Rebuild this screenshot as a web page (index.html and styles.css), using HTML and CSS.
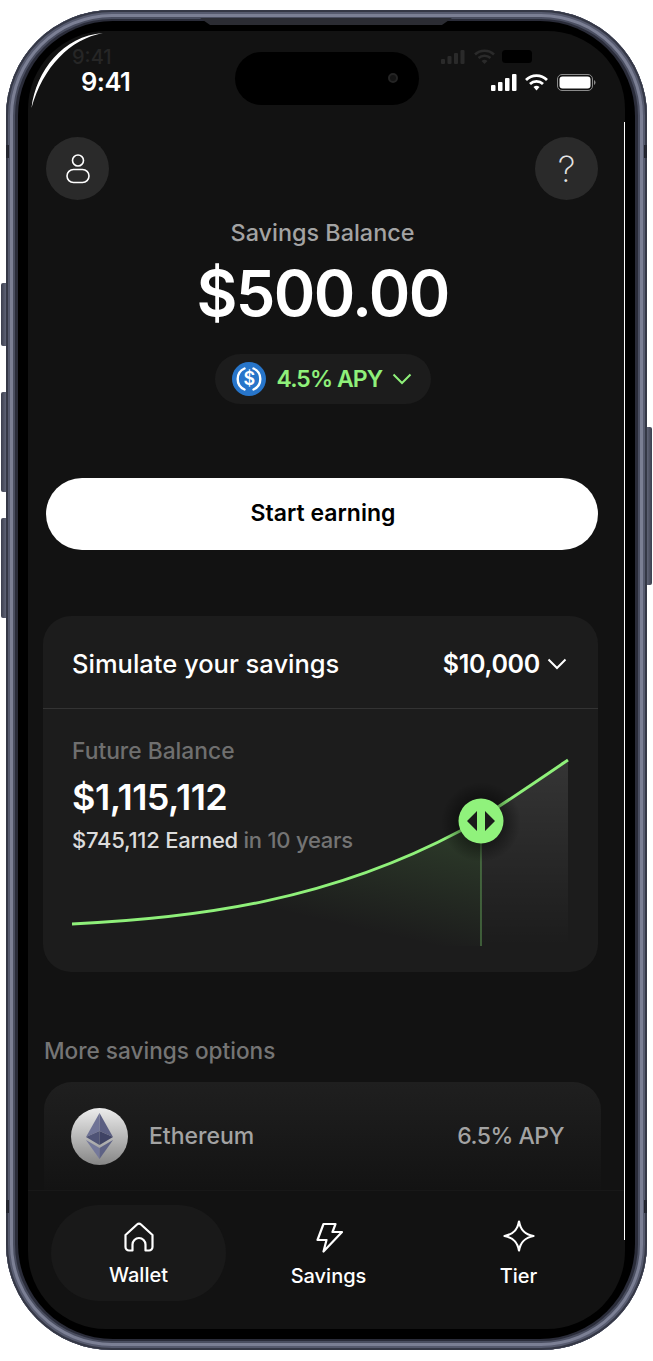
FILE: index.html
```html
<!DOCTYPE html>
<html lang="en">
<head>
    <meta charset="UTF-8">
    <title>Savings</title>
    <link rel="stylesheet" href="styles.css">
</head>
<body>

<div class="phone">
    <span class="side side-l1"></span>
    <span class="side side-l2"></span>
    <span class="side side-l3"></span>
    <span class="side side-r1"></span>
    <span class="band band-tl"></span>
    <span class="band band-tr"></span>
    <span class="band band-bl"></span>
    <span class="band band-br"></span>
    <span class="speaker"></span>

    <div class="bezel">
        <div class="screen">
            <!-- leftovers of the mockup: second status bar and white edge -->
            <div class="ghost-status">
                <span class="ghost-time">9:41</span>
                <svg class="ghost-icons" width="95" height="16" viewBox="0 0 95 16">
                    <rect x="1" y="10" width="4" height="5" rx="1" fill="#2a2a2a"/>
                    <rect x="7.5" y="7" width="4" height="8" rx="1" fill="#2a2a2a"/>
                    <rect x="14" y="4" width="4" height="11" rx="1" fill="#2a2a2a"/>
                    <rect x="20.5" y="1" width="4" height="14" rx="1" fill="#2a2a2a"/>
                    <path d="M35 5.5a14 14 0 0 1 19 0M38.5 9a9 9 0 0 1 12 0" fill="none" stroke="#2a2a2a" stroke-width="2.6"/>
                    <path d="M41.5 12a4.5 4.5 0 0 1 6 0L44.5 15z" fill="#2a2a2a"/>
                    <rect x="62" y="1" width="30" height="13" rx="3.5" fill="#000"/>
                </svg>
            </div>
            <svg class="edge-arc" width="90" height="90" viewBox="0 0 90 90">
                <path d="M3.5 77C8 40 35 5 75 2 42 8 15 36 3.5 77z" fill="#fff"/>
            </svg>
            <span class="edge-line"></span>
            <div class="island"><span class="camera"></span></div>

            <div class="status">
                <span class="time">9:41</span>
                <svg class="status-icons" width="106" height="17" viewBox="0 0 106 17">
                    <rect x="0" y="11" width="4.5" height="6" rx="1" fill="#fff"/>
                    <rect x="7" y="8" width="4.5" height="9" rx="1" fill="#fff"/>
                    <rect x="14" y="4" width="4.5" height="13" rx="1" fill="#fff"/>
                    <rect x="21" y="0" width="4.5" height="17" rx="1" fill="#fff"/>
                    <path d="M35 6a15 15 0 0 1 21 0M39 10a9.5 9.5 0 0 1 13 0" fill="none" stroke="#fff" stroke-width="2.8"/>
                    <path d="M42.5 13a4.5 4.5 0 0 1 6 0l-3 3.5z" fill="#fff"/>
                    <rect x="66.5" y="0.5" width="35" height="16" rx="4.5" fill="none" stroke="#8a8a8a"/>
                    <rect x="68.5" y="2.5" width="31" height="12" rx="3" fill="#fff"/>
                    <path d="M103 6v5a2.8 2.8 0 0 0 0-5z" fill="#8a8a8a"/>
                </svg>
            </div>

            <div class="actions">
                <button class="round-btn">
                    <svg width="26" height="30" viewBox="0 0 26 30" fill="none" stroke="#fff" stroke-width="1.6">
                        <circle cx="13" cy="6.5" r="5.5"/>
                        <rect x="2" y="15.5" width="22" height="13" rx="6.5"/>
                    </svg>
                </button>
                <button class="round-btn help">?</button>
            </div>

            <div class="balance">
                <div class="balance-label">Savings Balance</div>
                <div class="balance-amount">$500.00</div>
                <div class="apy-pill">
                    <svg width="34" height="34" viewBox="0 0 34 34">
                        <circle cx="17" cy="17" r="17" fill="#2775ca"/>
                        <path d="M12.5 6.5a11.5 11.5 0 0 0 0 21M21.5 6.5a11.5 11.5 0 0 1 0 21" fill="none" stroke="#fff" stroke-width="2.4" stroke-linecap="round"/>
                        <text x="17" y="23" text-anchor="middle" class="usdc-sign">$</text>
                    </svg>
                    <span>4.5% APY</span>
                    <svg width="20" height="12" viewBox="0 0 20 12" fill="none" stroke="#8ff07a" stroke-width="2">
                        <path d="M1.5 1.5L10 10l8.5-8.5"/>
                    </svg>
                </div>
            </div>

            <button class="start-btn">Start earning</button>

            <section class="sim-card">
                <div class="sim-head">
                    <span class="sim-title">Simulate your savings</span>
                    <span class="sim-amount">
                        $10,000
                        <svg width="20" height="12" viewBox="0 0 20 12" fill="none" stroke="#fff" stroke-width="2">
                            <path d="M1.5 1.5L10 10l8.5-8.5"/>
                        </svg>
                    </span>
                </div>
                <div class="sim-body">
                    <svg class="chart" width="555" height="263" viewBox="43 709 555 263">
                        <defs>
                            <linearGradient id="fillGreen" gradientUnits="userSpaceOnUse" x1="460" y1="835" x2="435" y2="946">
                                <stop offset="0" stop-color="#8ff07a" stop-opacity="0.14"/>
                                <stop offset="1" stop-color="#8ff07a" stop-opacity="0"/>
                            </linearGradient>
                            <linearGradient id="fillGray" gradientUnits="userSpaceOnUse" x1="0" y1="760" x2="0" y2="946">
                                <stop offset="0" stop-color="#fff" stop-opacity="0.11"/>
                                <stop offset="1" stop-color="#fff" stop-opacity="0"/>
                            </linearGradient>
                            <radialGradient id="knobShadow">
                                <stop offset="0.5" stop-color="#000" stop-opacity="0.45"/>
                                <stop offset="1" stop-color="#000" stop-opacity="0"/>
                            </radialGradient>
                        </defs>
                        <path d="M72 924C200 918 330 900 460 831L481 820V946H72z" fill="url(#fillGreen)"/>
                        <path d="M481 820C498 810 530 786 568 760V946H481z" fill="url(#fillGray)"/>
                        <path d="M72 924C200 918 330 900 460 831 498 808 530 786 568 760" fill="none" stroke="#8ff07a" stroke-width="3"/>
                        <line x1="481" y1="843" x2="481" y2="946" stroke="#5e9a54"/>
                        <circle cx="481" cy="822" r="40" fill="url(#knobShadow)"/>
                        <circle cx="481" cy="821" r="22.5" fill="#90f27c"/>
                        <path d="M477 811v20l-10-10zM485 811v20l10-10z" fill="#1b1b1b"/>
                    </svg>
                    <div class="future-label">Future Balance</div>
                    <div class="future-amount">$1,115,112</div>
                    <div class="future-note">$745,112 Earned <span class="muted">in 10 years</span></div>
                </div>
            </section>

            <div class="more-label">More savings options</div>
            <div class="option-card">
                <svg width="57" height="57" viewBox="0 0 57 57">
                    <defs>
                        <linearGradient id="ethBg" x1="0" y1="0" x2="0" y2="1">
                            <stop offset="0" stop-color="#ececec"/>
                            <stop offset="1" stop-color="#868686"/>
                        </linearGradient>
                    </defs>
                    <circle cx="28.5" cy="28.5" r="28.5" fill="url(#ethBg)"/>
                    <path d="M28.5 5L15 29l13.5-6z" fill="#6f7396"/>
                    <path d="M28.5 5L42 29l-13.5-6z" fill="#5b5f82"/>
                    <path d="M28.5 23L15 29l13.5 8z" fill="#4f5376"/>
                    <path d="M28.5 23L42 29l-13.5 8z" fill="#3f4364"/>
                    <path d="M15 32l13.5 8V51z" fill="#74789a"/>
                    <path d="M42 32l-13.5 8V51z" fill="#5d6184"/>
                </svg>
                <span class="option-name">Ethereum</span>
                <span class="option-apy">6.5% APY</span>
            </div>

            <nav class="tabbar">
                <a class="tab tab-active">
                    <svg width="32" height="30" viewBox="0 0 32 30" fill="none" stroke="#fff" stroke-width="2.2" stroke-linejoin="round">
                        <path d="M2.5 13L14 2.5a3 3 0 0 1 4 0L29.5 13v12a3.5 3.5 0 0 1-3.5 3.5h-3.5V22.5a6.5 6.5 0 0 0-13 0v6H6A3.5 3.5 0 0 1 2.5 25z"/>
                    </svg>
                    <span>Wallet</span>
                </a>
                <a class="tab">
                    <svg width="28" height="31" viewBox="0 0 28 31" fill="none" stroke="#fff" stroke-width="2.2" stroke-linejoin="round">
                        <path d="M8.5 2H20.5L17.5 10H27L8.5 29.5 11.5 18H2.5z"/>
                    </svg>
                    <span>Savings</span>
                </a>
                <a class="tab tab-tier">
                    <svg width="32" height="32" viewBox="0 0 32 32" fill="none" stroke="#fff" stroke-width="2.2" stroke-linejoin="round">
                        <path d="M16 1.5C17.5 10 21.5 14.2 30.5 16 21.5 17.8 17.5 22 16 30.5 14.5 22 10.5 17.8 1.5 16 10.5 14.2 14.5 10 16 1.5z"/>
                    </svg>
                    <span>Tier</span>
                </a>
            </nav>
        </div>
    </div>
</div>

</body>
</html>
```

FILE: styles.css
```css
* {
    box-sizing: border-box;
}
body {
    margin: 0;
    background: #fff;
    font-family: Inter, "Liberation Sans", sans-serif;
}
.phone {
    position: relative;
    width: 641px;
    height: 1340px;
    margin: 10px 0 0 6px;
    padding: 11px 12px 11px;
    border-radius: 106px;
    background: #2a2c39;
    box-shadow: inset 0 0 0 2px #353846, inset 0 0 0 4px #565a6e, inset 0 0 0 7px #7b7f94, inset 0 0 0 9px #4a4e60;
}
.side {
    position: absolute;
    width: 5px;
    background: linear-gradient(90deg, #3c3f4e, #5f6376);
}
.side-l1 {
    left: -5px;
    top: 273px;
    height: 63px;
    border-radius: 2px 0 0 2px;
}
.side-l2 {
    left: -5px;
    top: 382px;
    height: 100px;
    border-radius: 2px 0 0 2px;
}
.side-l3 {
    left: -5px;
    top: 508px;
    height: 100px;
    border-radius: 2px 0 0 2px;
}
.side-r1 {
    right: -5px;
    top: 417px;
    height: 158px;
    border-radius: 0 2px 2px 0;
    background: linear-gradient(90deg, #5f6376, #3c3f4e);
}
.band {
    position: absolute;
    width: 3px;
    height: 13px;
    background: #23252f;
}
.band-tl {
    left: 0;
    top: 135px;
}
.band-tr {
    right: 0;
    top: 135px;
}
.band-bl {
    left: 0;
    top: 1190px;
}
.band-br {
    right: 0;
    top: 1190px;
}
.speaker {
    position: absolute;
    z-index: 2;
    left: 194px;
    top: 8px;
    width: 252px;
    height: 7px;
    background: #2b2c33;
    clip-path: polygon(0 0, 100% 0, 96% 100%, 4% 100%);
}
.bezel {
    height: 100%;
    padding: 10px;
    border-radius: 95px;
    background: #000;
}
.screen {
    position: relative;
    height: 100%;
    overflow: hidden;
    border-radius: 78px;
    background: #121212;
    color: #fff;
}
.ghost-status {
    position: absolute;
    left: 44px;
    top: 18px;
    width: 463px;
    display: flex;
    justify-content: space-between;
    align-items: center;
}
.ghost-time {
    font-size: 20px;
    line-height: 14px;
    font-weight: 500;
    color: #262626;
}
.edge-arc {
    position: absolute;
    left: 0;
    top: 0;
}
.edge-line {
    position: absolute;
    right: 0;
    top: 91px;
    bottom: 89px;
    width: 1px;
    background: #fff;
}
.island {
    position: absolute;
    left: 207px;
    top: 21px;
    width: 184px;
    height: 53px;
    border-radius: 27px;
    background: #000;
}
.camera {
    position: absolute;
    left: 153px;
    top: 21px;
    width: 10px;
    height: 10px;
    border-radius: 50%;
    background: #141414;
    border: 2px solid #242424;
}

.status {
    height: 64px;
    padding: 38px 28px 0 53px;
    display: flex;
    justify-content: space-between;
    align-items: center;
    position: relative;
}
.time {
    font-size: 25.5px;
    font-weight: 600;
    line-height: 20px;
    letter-spacing: -0.5px;
}
.actions {
    margin: 42px 27px 0 18px;
    display: flex;
    justify-content: space-between;
    position: relative;
}
.round-btn {
    width: 63px;
    height: 63px;
    padding: 0;
    border: 0;
    border-radius: 50%;
    background: #2a2a2a;
    color: #e4e4e4;
    display: flex;
    align-items: center;
    justify-content: center;
}
.help {
    font-family: Inter, sans-serif;
    font-size: 36px;
    font-weight: 200;
}

.balance {
    display: flex;
    flex-direction: column;
    align-items: center;
    padding-right: 8px;
}
.balance-label {
    margin-top: 20px;
    font-size: 23.4px;
    line-height: 26px;
    font-weight: 500;
    color: #a3a3a3;
}
.balance-amount {
    margin-top: 9px;
    font-size: 63px;
    line-height: 76px;
    font-weight: 600;
    letter-spacing: -1.6px;
}
.apy-pill {
    margin-top: 23px;
    width: 216px;
    height: 50px;
    padding-left: 17px;
    border-radius: 25px;
    background: #1c1c1c;
    display: flex;
    align-items: center;
    font-size: 23px;
    font-weight: 600;
    letter-spacing: -0.9px;
    color: #8ff07a;
}
.apy-pill span {
    margin: 0 10px 0 11px;
}
.usdc-sign {
    font-size: 18px;
    font-weight: 600;
    fill: #fff;
}
.start-btn {
    display: block;
    width: 552px;
    height: 72px;
    margin: 74px 0 0 18px;
    padding: 0 0 2px 2px;
    border: 0;
    border-radius: 36px;
    background: #fff;
    color: #000;
    font-family: inherit;
    font-size: 23px;
    font-weight: 600;
}

.sim-card {
    width: 555px;
    height: 356px;
    margin: 66px 0 0 15px;
    border-radius: 28px;
    background: #1c1c1c;
}
.sim-head {
    height: 93px;
    padding: 3px 31px 0 29px;
    border-bottom: 1px solid #333;
    display: flex;
    justify-content: space-between;
    align-items: center;
}
.sim-title {
    font-size: 25.5px;
    font-weight: 500;
}
.sim-amount {
    display: flex;
    align-items: center;
    gap: 7px;
    font-size: 25px;
    font-weight: 600;
    letter-spacing: -0.3px;
}
.sim-body {
    position: relative;
    height: 263px;
    padding: 29px 0 0 29px;
}
.chart {
    position: absolute;
    left: 0;
    top: 0;
}
.future-label {
    position: relative;
    font-size: 22.8px;
    line-height: 26px;
    font-weight: 500;
    color: #6f6f6f;
}
.future-amount {
    position: relative;
    margin-top: 10px;
    font-size: 36px;
    line-height: 46px;
    font-weight: 600;
    letter-spacing: -0.5px;
}
.future-note {
    position: relative;
    margin-top: 6px;
    font-size: 22px;
    line-height: 28px;
    font-weight: 500;
    letter-spacing: -0.25px;
    color: #dcdcdc;
}
.muted {
    color: #747474;
}

.more-label {
    margin: 66px 0 0 16px;
    font-size: 22.6px;
    line-height: 26px;
    font-weight: 500;
    color: #757575;
}
.option-card {
    width: 557px;
    height: 108px;
    margin: 18px 0 0 16px;
    padding: 26px 37px 0 27px;
    border-radius: 28px 28px 0 0;
    background: linear-gradient(#1f1f1f, #131313);
    display: flex;
    align-items: flex-start;
    gap: 21px;
}
.option-name {
    flex: 1;
    font-size: 23px;
    line-height: 57px;
    font-weight: 500;
    color: #a3a3a3;
}
.option-apy {
    font-size: 23px;
    line-height: 57px;
    font-weight: 500;
    letter-spacing: -0.5px;
    color: #a3a3a3;
}

.tabbar {
    padding: 14px 0 0 23px;
    border-top: 1px solid #181818;
    display: grid;
    grid-template-columns: 175px 175px 175px;
    gap: 15px;
}
.tab {
    height: 96px;
    padding-top: 17px;
    border-radius: 48px;
    display: flex;
    flex-direction: column;
    align-items: center;
    gap: 11px;
    font-size: 20px;
    line-height: 24px;
    font-weight: 500;
    color: #fff;
}
.tab-active {
    background: #191919;
}
.tab-tier {
    padding-top: 15px;
    gap: 12px;
}
```
